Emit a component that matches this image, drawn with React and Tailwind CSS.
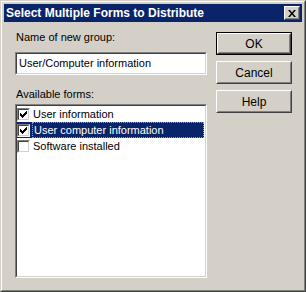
import React from 'react';

const font = { fontFamily: '"Liberation Sans", Arial, sans-serif' };

const Check = () => (
    <svg width="7" height="7" viewBox="0 0 7 7" className="block">
        <path d="M0 2h1v1h1v1h1V3h1V2h1V1h1V0h1v3h-1v1h-1v1h-1v1h-1v1H2V6H1V5H0z" fill="#000" />
    </svg>
);

const CheckBox = ({ checked }) => (
    <div className="w-[13px] h-[13px] border border-t-[#808080] border-l-[#808080] border-b-white border-r-white shrink-0">
        <div className="w-full h-full border border-t-[#404040] border-l-[#404040] border-b-[#d4d0c8] border-r-[#d4d0c8] bg-white flex items-center justify-center">
            {checked && <Check />}
        </div>
    </div>
);

const Button = ({ label, isDefault }) => {
    const inner = (
        <div className="w-full h-full border border-t-white border-l-white border-b-[#404040] border-r-[#404040]">
            <div className="w-full h-full border border-t-[#d4d0c8] border-l-[#d4d0c8] border-b-[#808080] border-r-[#808080] flex items-center justify-center text-[12px] text-black">
                {label}
            </div>
        </div>
    );
    return (
        <div className={`w-[76px] h-[23px] ${isDefault ? 'border border-black' : ''}`}>{inner}</div>
    );
};

const Sunken = ({ className, children }) => (
    <div className={`border border-t-[#808080] border-l-[#808080] border-b-white border-r-white ${className}`}>
        <div className="w-full h-full border border-t-[#404040] border-l-[#404040] border-b-[#d4d0c8] border-r-[#d4d0c8] bg-white">
            {children}
        </div>
    </div>
);

const forms = [
    { name: 'User information', checked: true },
    { name: 'User computer information', checked: true, selected: true },
    { name: 'Software installed', checked: false },
];

export default function App() {
    return (
        <div style={font} className="w-[306px] h-[292px] bg-[#d4d0c8] border border-t-[#d4d0c8] border-l-[#d4d0c8] border-b-[#404040] border-r-[#404040]">
            <div className="w-full h-full border border-t-white border-l-white border-b-[#808080] border-r-[#808080] p-[2px] flex flex-col">
                <div className="h-[18px] bg-[#0a246a] flex items-center justify-between pl-[2px] pr-[2px]">
                    <span className="text-white font-bold text-[12px] leading-none">Select Multiple Forms to Distribute</span>
                    <div className="w-[16px] h-[14px] border border-t-white border-l-white border-b-[#404040] border-r-[#404040] bg-[#d4d0c8]">
                        <div className="w-full h-full border border-t-[#d4d0c8] border-l-[#d4d0c8] border-b-[#808080] border-r-[#808080] flex items-center justify-center">
                            <svg width="8" height="7" viewBox="0 0 8 7" className="block">
                                <path d="M0 0h2l2 2.5L6 0h2L5 3.5 8 7H6L4 4.5 2 7H0l3-3.5z" fill="#000" />
                            </svg>
                        </div>
                    </div>
                </div>
                <div className="flex pl-[11px] pt-[8px] gap-[9px]">
                    <div className="w-[192px] flex flex-col">
                        <div className="text-[11px] leading-[14px] text-black pl-[1px]">Name of new group:</div>
                        <Sunken className="mt-[8px] h-[23px]">
                            <div className="text-[11px] leading-[19px] pl-[2px] text-black">User/Computer information</div>
                        </Sunken>
                        <div className="mt-[12px] text-[11px] leading-[14px] text-black pl-[1px]">Available forms:</div>
                        <Sunken className="mt-[3px] h-[174px]">
                            <div className="flex flex-col pr-[1px]">
                                {forms.map((f) => (
                                    <div key={f.name} className={`h-[16px] flex items-center gap-[2px] ${f.selected ? 'bg-[#0a246a]' : ''}`}>
                                        <CheckBox checked={f.checked} />
                                        <span className={`text-[11px] leading-[14px] px-[1px] h-full flex items-center grow ${f.selected ? 'text-white border border-dotted border-[#a0a0a0]' : 'text-black'}`}>{f.name}</span>
                                    </div>
                                ))}
                            </div>
                        </Sunken>
                    </div>
                    <div className="flex flex-col gap-[6px] mt-[2px]">
                        <Button label="OK" isDefault />
                        <Button label="Cancel" />
                        <Button label="Help" />
                    </div>
                </div>
            </div>
        </div>
    );
}
